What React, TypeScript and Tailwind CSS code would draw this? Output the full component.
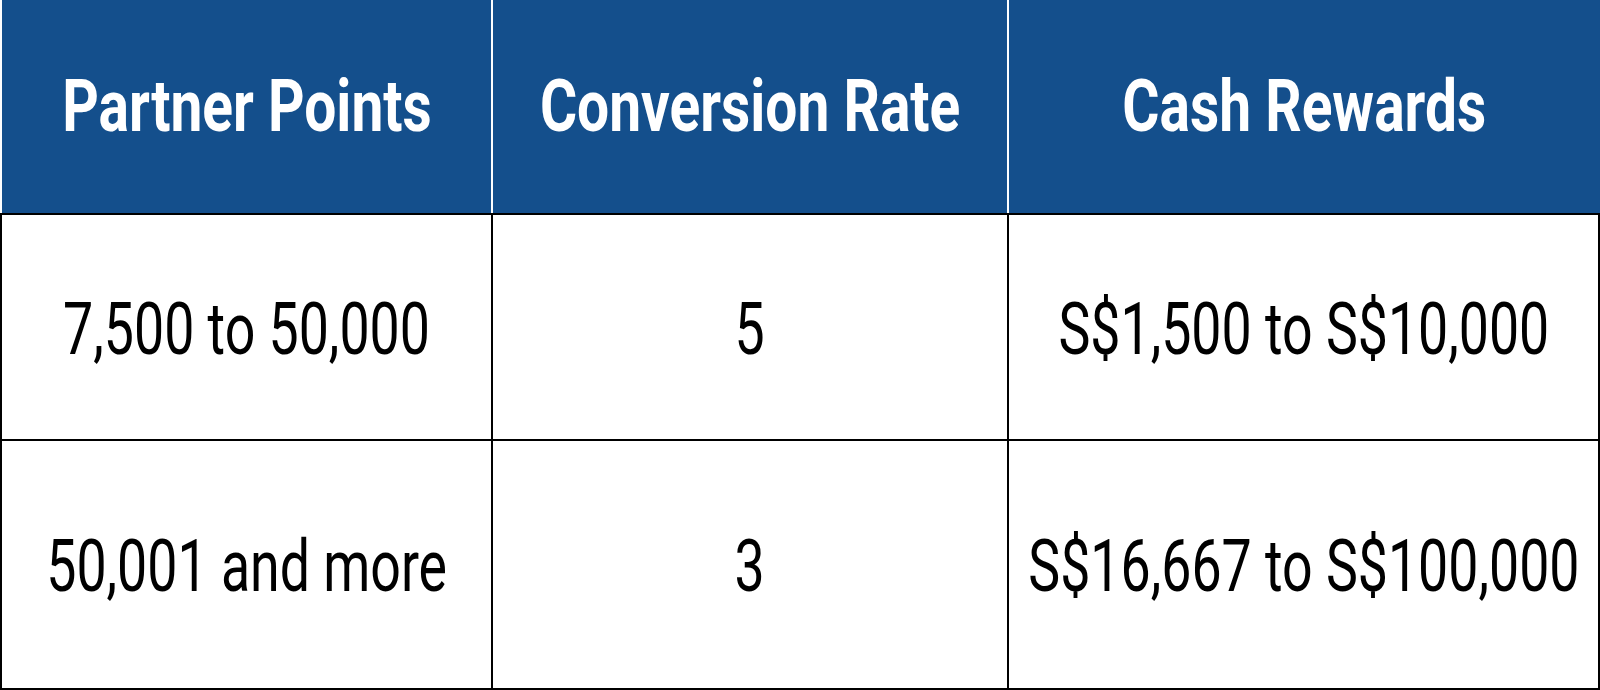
import React from 'react';

const headers = ['Partner Points', 'Conversion Rate', 'Cash Rewards'];

const rows = [
  ['7,500 to 50,000', '5', 'S$1,500 to S$10,000'],
  ['50,001 and more', '3', 'S$16,667 to S$100,000'],
];

const font = { fontFamily: 'Roboto, "Liberation Sans", sans-serif' };

const App: React.FC = () => {
  return (
    <div className="w-[1600px] h-[690px] bg-white overflow-hidden" style={font}>
      {/* Header */}
      <div className="flex h-[213px] bg-white pl-[2px] gap-[2px]">
        {headers.map((h, i) => (
          <div
            key={h}
            className={`flex items-center justify-center bg-[#144f8c] ${
              i === 0 ? 'w-[489px]' : i === 1 ? 'w-[514px]' : 'w-[591px]'
            }`}
          >
            <span className="inline-block text-[72px] leading-none font-bold text-white scale-x-[0.79] whitespace-nowrap">
              {h}
            </span>
          </div>
        ))}
      </div>

      {/* Body */}
      <div className="grid grid-cols-[489px_514px_589px] grid-rows-[224px_247px] gap-[2px] p-[2px] bg-black">
        {rows.map((row, r) =>
          row.map((cell, c) => (
            <div key={`${r}-${c}`} className="flex items-center justify-center bg-white pt-[4px]">
              <span className="inline-block text-[73px] leading-none text-black scale-x-[0.735] whitespace-nowrap">
                {cell}
              </span>
            </div>
          ))
        )}
      </div>
    </div>
  );
};

export default App;
